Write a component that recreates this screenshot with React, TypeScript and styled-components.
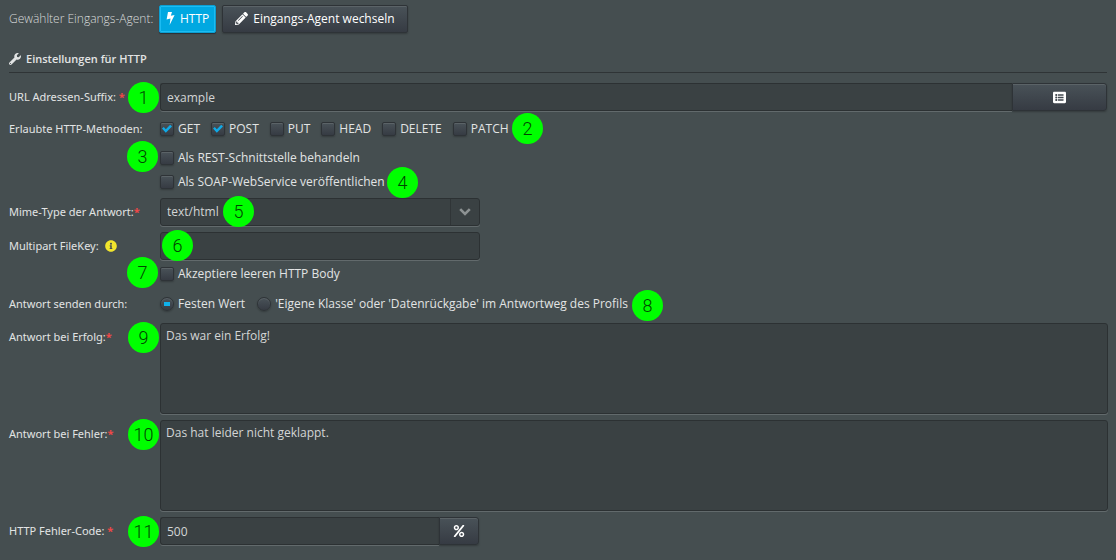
import React from "react";
import styled, { createGlobalStyle, css } from "styled-components";
import { FaPencilAlt, FaWrench, FaListAlt, FaInfoCircle, FaPercent } from "react-icons/fa";

const GlobalStyle = createGlobalStyle`
  *, *::before, *::after { box-sizing: border-box; }
  html { min-height: 100%; background: #454e50; }
  body {
    margin: 0;
    color: #e2e4e4;
    font-family: "Open Sans", sans-serif;
    font-size: 12px;
    line-height: 16px;
  }
  input, button, select, textarea { font: inherit; color: inherit; }
`;

const Page = styled.main`
  padding: 4px 9px 12px;
`;

const AgentBar = styled.div`
  display: grid;
  grid-template-columns: 150px auto auto;
  justify-content: start;
  align-items: center;
  height: 29px;
`;

const AgentLabel = styled.span`
  color: #d8dbdb;
  font-weight: 300;
  white-space: nowrap;
`;

const raised = css`
  background: linear-gradient(#495258, #363b43);
  border: 1px solid #2e3337;
  box-shadow: inset 0 1px 0 #5b6367, 0 1px 2px rgba(0, 0, 0, 0.25);
`;

const AgentButton = styled.button<{ $active?: boolean }>`
  display: inline-flex;
  align-items: center;
  gap: 5px;
  height: 28px;
  padding: 0 ${(p) => (p.$active ? "6px" : "12px")};
  margin-right: 6px;
  color: #fff;
  border-radius: 2px;
  white-space: nowrap;
  ${raised}
  ${(p) =>
    p.$active &&
    css`
      background: #00a8e1;
      border-color: #0c9fd2;
      box-shadow: inset 0 0 0 1px #1cbcf2, 0 1px 1px #2a3034;
    `}
`;

const SectionTitle = styled.h2`
  display: flex;
  align-items: center;
  gap: 5px;
  height: 40px;
  margin: 0 0 10px;
  padding-top: 13px;
  border-bottom: 1px solid #2f3436;
  font-size: 11px;
  font-weight: 600;
`;

const Form = styled.form`
  display: flex;
  flex-direction: column;
  gap: 6px;
`;

const Row = styled.div<{ $height?: number }>`
  position: relative;
  display: grid;
  grid-template-columns: 151px minmax(0, 1fr);
  align-items: center;
  min-height: ${(p) => p.$height ?? 28}px;
`;

const OptionRow = styled(Row)`
  padding-top: 2px;
`;

const Caption = styled.label<{ $top?: boolean }>`
  display: flex;
  align-items: center;
  font-family: "Noto Sans", "Open Sans", sans-serif;
  font-size: 11px;
  white-space: pre;
  ${(p) => p.$top && "align-self: start; padding-top: 6px;"}

  svg { margin-left: 6px; color: #f1e52d; }
`;

const Required = styled.span`
  color: #f04747;
  font-weight: 700;
`;

const well = css`
  background: #3a4143;
  border: 1px solid #2c3133;
  border-radius: 3px;
  box-shadow: 0 1px 0 #626a6c;
  color: #d3d5d5;
  outline: none;
`;

const TextInput = styled.input<{ $joined?: boolean }>`
  ${well}
  flex: 1;
  min-width: 0;
  height: 28px;
  padding: 0 6px;
  ${(p) => p.$joined && "border-right: 0; border-radius: 3px 0 0 3px;"}
`;

const TextArea = styled.textarea`
  ${well}
  display: block;
  width: 100%;
  height: 91px;
  padding: 4px 5px;
  resize: none;
`;

const Field = styled.div<{ $narrow?: boolean }>`
  position: relative;
  display: flex;
  margin-right: -1px;
  ${(p) => p.$narrow && "width: 320px; margin-right: 0;"}
`;

const SideButton = styled.button<{ $wide?: boolean }>`
  display: flex;
  align-items: center;
  justify-content: center;
  width: ${(p) => (p.$wide ? 95 : 40)}px;
  height: 28px;
  margin: 0 1px 0 0;
  padding: 0;
  border-radius: 0 3px 3px 0;
  color: #fff;
  ${raised}
`;

const Select = styled.select`
  ${well}
  appearance: none;
  width: 100%;
  height: 28px;
  padding: 0 6px;
`;

const SelectArrow = styled.span`
  position: absolute;
  inset: 1px 1px 1px auto;
  display: flex;
  align-items: center;
  justify-content: center;
  width: 29px;
  border-left: 1px solid #303537;
  color: #8d9293;
  pointer-events: none;
`;

const Options = styled.div<{ $gap?: number }>`
  display: flex;
  align-items: center;
  gap: ${(p) => p.$gap ?? 11}px;
`;

const Group = styled.div`
  display: flex;
  flex-direction: column;
`;

const Option = styled.label`
  display: flex;
  align-items: center;
  gap: 4px;
  white-space: nowrap;
`;

const Tick = styled.input`
  ${raised}
  appearance: none;
  display: grid;
  place-items: center;
  width: 14px;
  height: 14px;
  margin: 0;
  border-radius: 2px;

  &[type="radio"] { border-radius: 50%; }
  &[type="checkbox"]:checked::before {
    content: "";
    width: 10px;
    height: 9px;
    background: #0fa9e6;
    clip-path: polygon(0 45%, 18% 27%, 38% 52%, 82% 4%, 100% 22%, 38% 92%);
  }
  &[type="radio"]:checked::before {
    content: "";
    width: 6px;
    height: 4px;
    background: #0fb0ea;
  }
`;

const Pin = styled.span<{ $x: number; $y?: number }>`
  position: absolute;
  z-index: 1;
  left: ${(p) => p.$x}px;
  top: ${(p) => p.$y ?? -1}px;
  display: flex;
  align-items: center;
  justify-content: center;
  width: 31px;
  height: 31px;
  border-radius: 50%;
  background: #00ff00;
  color: #004400;
  font-family: Roboto, sans-serif;
  font-size: 18px;
  font-weight: 300;
  pointer-events: none;
`;

const methods = ["GET", "POST", "PUT", "HEAD", "DELETE", "PATCH"];

export default function App() {
  return (
    <>
      <GlobalStyle />
      <Page>
        <AgentBar>
          <AgentLabel>Gewählter Eingangs-Agent:</AgentLabel>
          <AgentButton type="button" $active>
            <svg width="9" height="13" viewBox="0 0 9 13" fill="currentColor"><path d="M2 0h4L4.800 3.800 8.600 3 3.600 13 4.500 6.500 .6 7.400z" /></svg>
            HTTP
          </AgentButton>
          <AgentButton type="button"><FaPencilAlt size={13} />Eingangs-Agent wechseln</AgentButton>
        </AgentBar>
        <SectionTitle><FaWrench size={12} />Einstellungen für HTTP</SectionTitle>
        <Form>
          <Row>
            <Caption htmlFor="suffix">URL Adressen-Suffix: <Required>*</Required></Caption>
            <Field>
              <TextInput id="suffix" defaultValue="example" $joined />
              <SideButton type="button" $wide aria-label="Liste"><FaListAlt size={13} /></SideButton>
            </Field>
            <Pin $x={119}>1</Pin>
          </Row>
          <OptionRow $height={22}>
            <Caption as="span">Erlaubte HTTP-Methoden:</Caption>
            <Options>
              {methods.map((m, i) => (
                <Option key={m}><Tick type="checkbox" defaultChecked={i < 2} />{m}</Option>
              ))}
            </Options>
            <Pin $x={503} $y={-4}>2</Pin>
          </OptionRow>
          <Group>
            <OptionRow $height={24}>
              <span />
              <Option><Tick type="checkbox" />Als REST-Schnittstelle behandeln</Option>
              <Pin $x={118} $y={-4}>3</Pin>
            </OptionRow>
            <OptionRow $height={23}>
              <span />
              <Option><Tick type="checkbox" />Als SOAP-WebService veröffentlichen</Option>
              <Pin $x={378} $y={-2}>4</Pin>
            </OptionRow>
          </Group>
          <Row>
            <Caption htmlFor="mime">Mime-Type der Antwort:<Required>*</Required></Caption>
            <Field $narrow>
              <Select id="mime"><option>text/html</option></Select>
              <SelectArrow>
                <svg width="12" height="8" viewBox="0 0 12 8" fill="none" stroke="currentColor" strokeWidth="2.6"><path d="M1.2 1.2 6 6l4.800-4.800" /></svg>
              </SelectArrow>
            </Field>
            <Pin $x={214} $y={-2}>5</Pin>
          </Row>
          <Row>
            <Caption htmlFor="filekey">Multipart FileKey:<FaInfoCircle size={12} /></Caption>
            <Field $narrow><TextInput id="filekey" /></Field>
            <Pin $x={153} $y={-2}>6</Pin>
          </Row>
          <Row $height={16}>
            <span />
            <Option><Tick type="checkbox" />Akzeptiere leeren HTTP Body</Option>
            <Pin $x={118} $y={-9}>7</Pin>
          </Row>
          <OptionRow $height={29}>
            <Caption as="span">Antwort senden durch:</Caption>
            <Options $gap={12}>
              <Option><Tick type="radio" name="answer" defaultChecked />Festen Wert</Option>
              <Option><Tick type="radio" name="answer" />'Eigene Klasse' oder 'Datenrückgabe' im Antwortweg des Profils</Option>
            </Options>
            <Pin $x={623} $y={2}>8</Pin>
          </OptionRow>
          <Row>
            <Caption htmlFor="success" $top>Antwort bei Erfolg:<Required>*</Required></Caption>
            <Field><TextArea id="success" defaultValue="Das war ein Erfolg!" /></Field>
            <Pin $x={119}>9</Pin>
          </Row>
          <Row>
            <Caption htmlFor="failure" $top>Antwort bei Fehler:<Required>*</Required></Caption>
            <Field><TextArea id="failure" defaultValue="Das hat leider nicht geklappt." /></Field>
            <Pin $x={119}>10</Pin>
          </Row>
          <Row>
            <Caption htmlFor="code">HTTP Fehler-Code: <Required>*</Required></Caption>
            <Field $narrow>
              <TextInput id="code" defaultValue="500" $joined />
              <SideButton type="button" aria-label="Variable"><FaPercent size={12} /></SideButton>
            </Field>
            <Pin $x={119}>11</Pin>
          </Row>
        </Form>
      </Page>
    </>
  );
}
